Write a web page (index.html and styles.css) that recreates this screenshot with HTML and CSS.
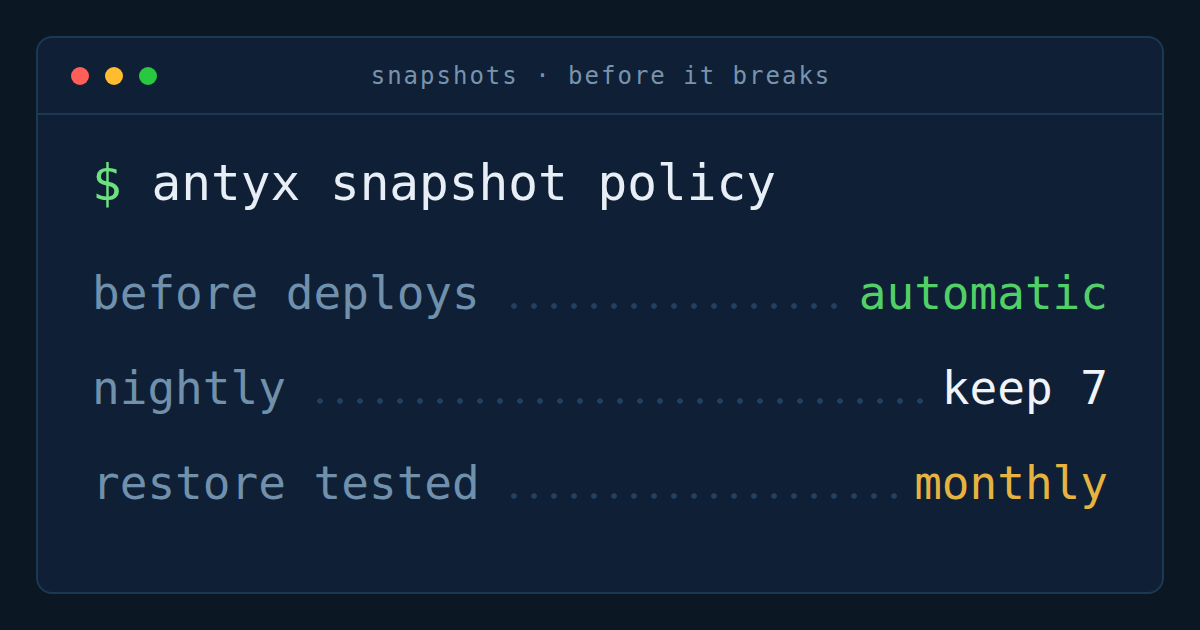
FILE: index.html
```html
<!DOCTYPE html>
<html lang="en">
<head>
<meta charset="utf-8">
<title>snapshots · before it breaks</title>
<link rel="stylesheet" href="styles.css">
</head>
<body>
<div class="card">
  <div class="titlebar">
    <div class="lights">
      <span class="light red"></span>
      <span class="light yellow"></span>
      <span class="light green"></span>
    </div>
    <div class="title">snapshots · before it breaks</div>
    <div class="spacer"></div>
  </div>
  <div class="content">
    <div class="cmd"><span class="prompt">$</span> antyx snapshot policy</div>
    <div class="row">
      <span class="label">before deploys</span>
      <span class="leader"></span>
      <span class="value auto">automatic</span>
    </div>
    <div class="row">
      <span class="label">nightly</span>
      <span class="leader"></span>
      <span class="value keep">keep 7</span>
    </div>
    <div class="row">
      <span class="label">restore tested</span>
      <span class="leader"></span>
      <span class="value month">monthly</span>
    </div>
  </div>
</div>
</body>
</html>
```

FILE: styles.css
```css
* { box-sizing: border-box; }

html, body {
  margin: 0;
  background: #0b1723;
}

body {
  padding: 36px;
  font-family: "DejaVu Sans Mono", "Liberation Mono", monospace;
}

.card {
  width: 1128px;
  height: 558px;
  background: #0f2036;
  border: 2px solid #1d3853;
  border-radius: 16px;
  overflow: hidden;
}

.titlebar {
  height: 77px;
  border-bottom: 2px solid #1d3853;
  display: grid;
  grid-template-columns: 1fr auto 1fr;
  align-items: center;
  padding: 0 33px;
}

.lights {
  display: flex;
  gap: 16px;
}

.light {
  width: 18px;
  height: 18px;
  border-radius: 50%;
  display: block;
}
.red { background: #ff5f57; }
.yellow { background: #febc2e; }
.green { background: #28c840; }

.title {
  color: #7a93ad;
  font-size: 24px;
  letter-spacing: 2px;
  white-space: nowrap;
  padding-left: 2px;
}

.content {
  padding: 38px 54px 0 54px;
}

.cmd {
  font-size: 49.4px;
  line-height: 60px;
  color: #e8eef6;
  margin-bottom: 33px;
  white-space: pre;
}

.prompt { color: #6ee07f; }

.row {
  display: flex;
  align-items: baseline;
  height: 95px;
  line-height: 95px;
  font-size: 46px;
  white-space: pre;
}

.label { color: #7090ab; }

.leader {
  flex: 1;
  height: 6px;
  margin: 0 12px 0 24px;
  background-image: radial-gradient(circle at 10px 3px, #22405f 2.5px, rgba(34, 64, 95, 0) 3.1px);
  background-size: 20px 6px;
  background-repeat: repeat-x;
}

.value.auto { color: #52d068; }
.value.keep { color: #f0f4f8; }
.value.month { color: #e6b340; }
```
